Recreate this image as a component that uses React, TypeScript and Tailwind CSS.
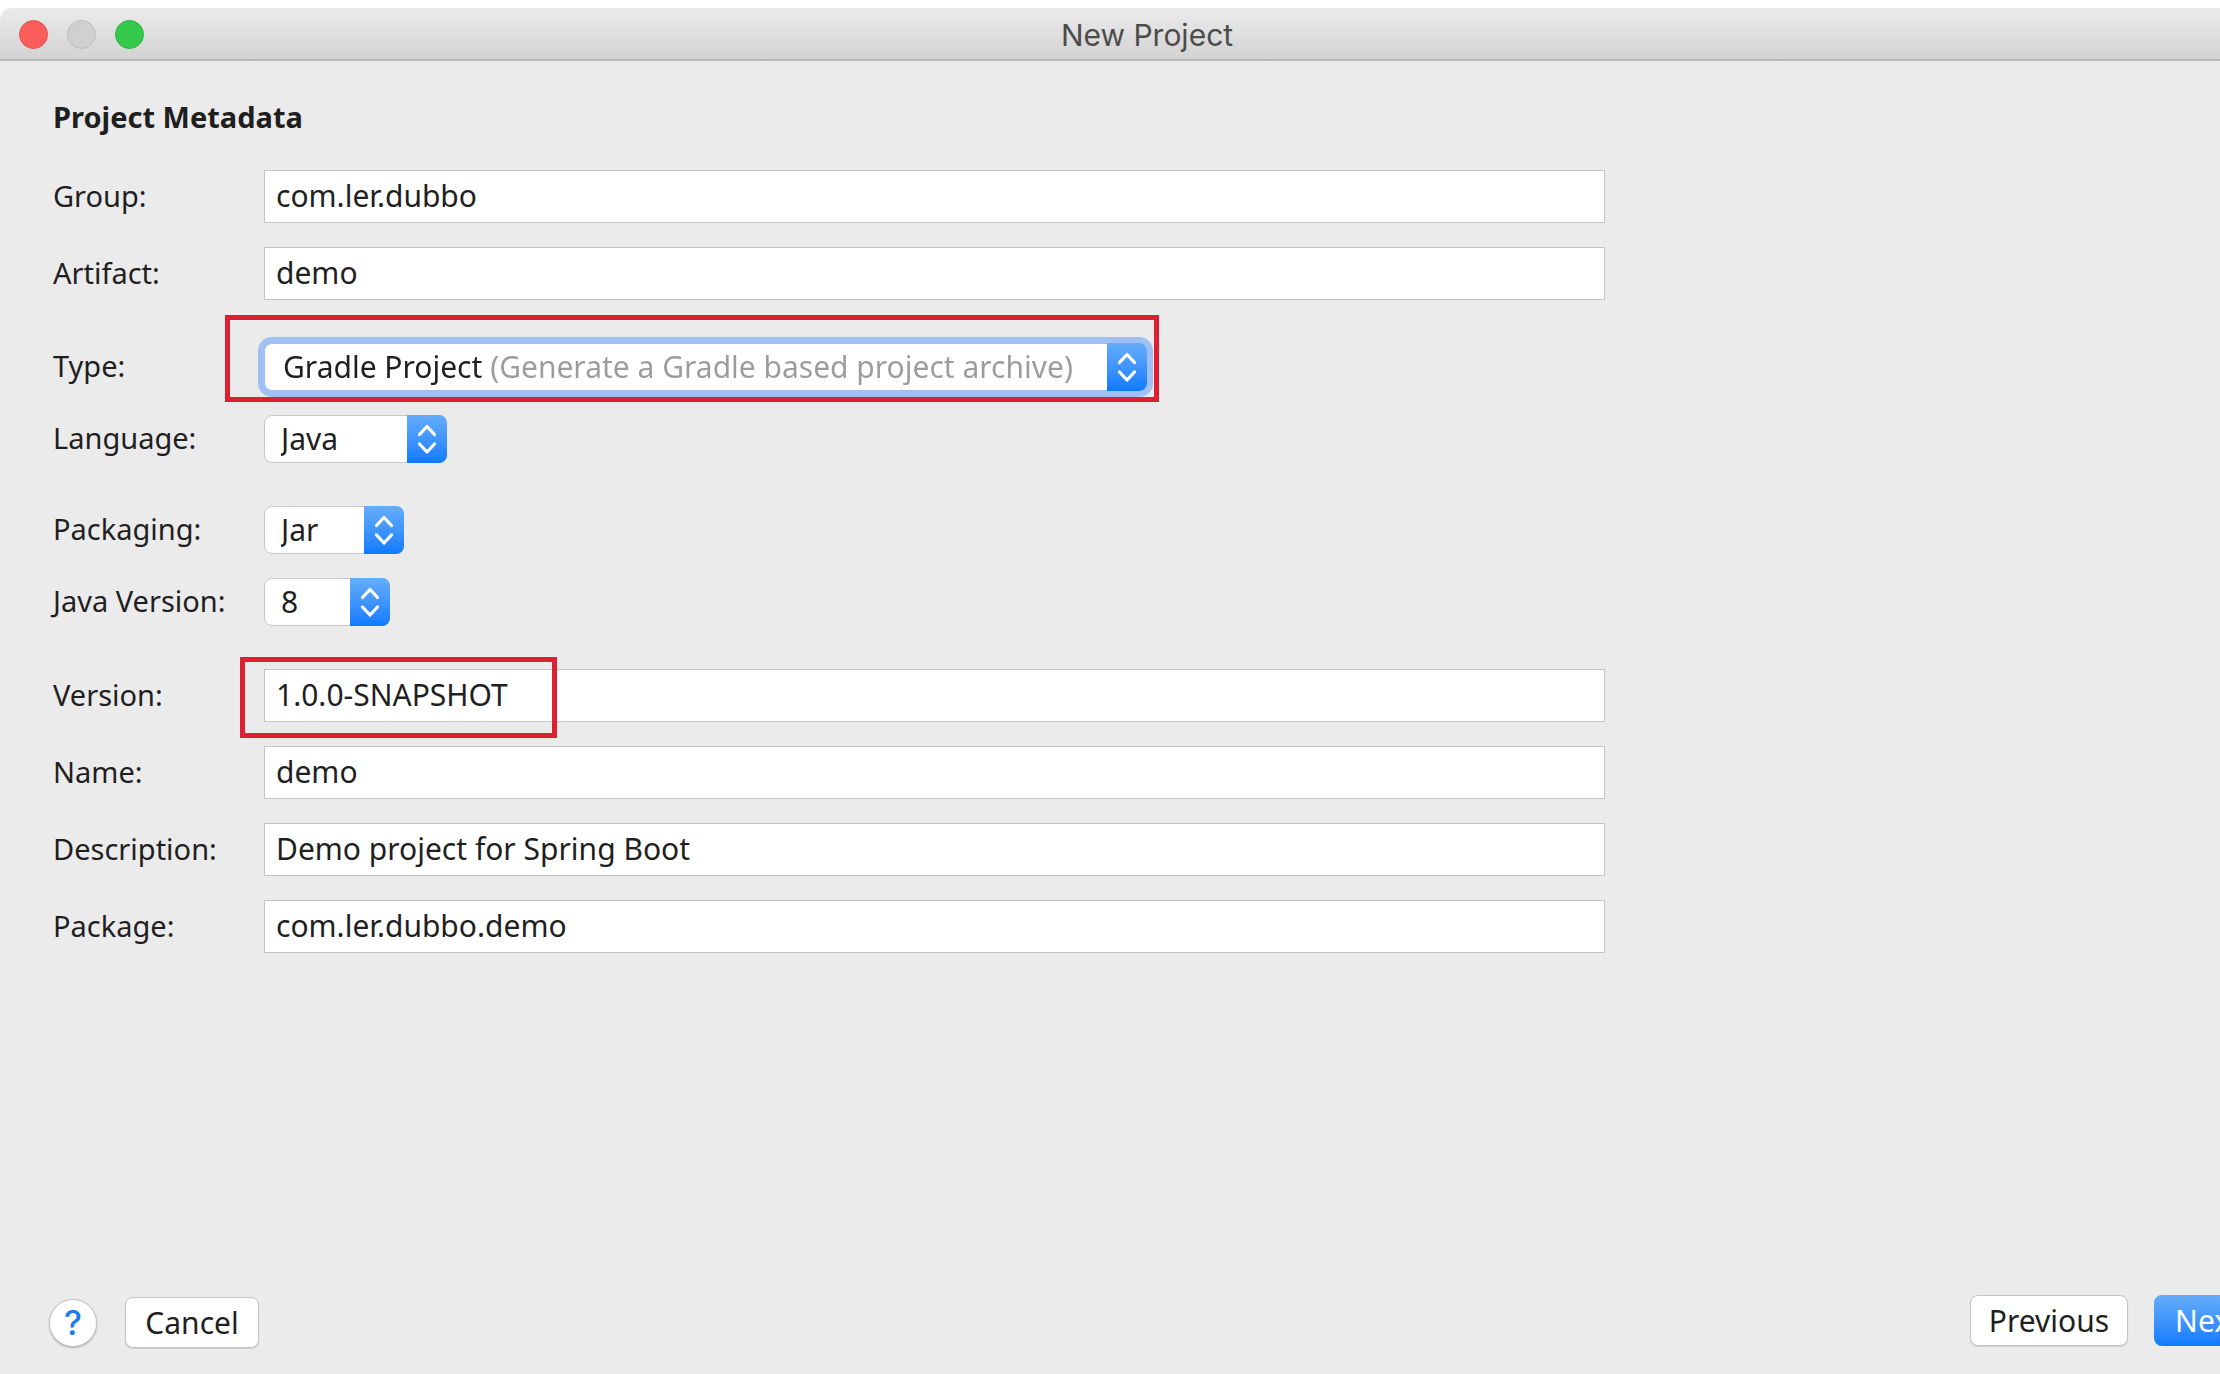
import type { ReactNode } from "react";

function Row({ id, label, children }: { id: string; label: string; children: ReactNode }) {
  return (
    <div className="flex items-center">
      <label htmlFor={id} className="w-[211px] shrink-0 pb-0.5 text-[29px]">
        {label}
      </label>
      {children}
    </div>
  );
}

function TextField({ id, label, value, marked }: { id: string; label: string; value: string; marked?: boolean }) {
  return (
    <Row id={id} label={label}>
      <div className="relative flex-1">
        <input
          id={id}
          type="text"
          defaultValue={value}
          className="block h-[53px] w-full border border-[#c4c4c4] bg-white px-[11px] pb-0.5 outline-none"
        />
        {marked && (
          <div className="pointer-events-none absolute -top-3 -bottom-4 -left-6 w-[317px] border-[5px] border-[#dc2032]" />
        )}
      </div>
    </Row>
  );
}

function Stepper() {
  return (
    <span className="pointer-events-none absolute -inset-y-px -right-px flex w-10 items-center justify-center rounded-r-lg bg-linear-to-b from-[#65adfa] to-[#0a7aff]">
      <svg width="22" height="32" viewBox="0 0 22 32" fill="none" stroke="white" strokeWidth="3.2" strokeLinecap="round" strokeLinejoin="round">
        <path d="M3.5 11.5 11 3.5l7.5 8M3.5 21l7.5 8 7.5-8" />
      </svg>
    </span>
  );
}

function SelectField({
  id,
  label,
  width,
  options,
  focused,
}: {
  id: string;
  label: string;
  width: string;
  options: string[];
  focused?: boolean;
}) {
  return (
    <Row id={id} label={label}>
      <div
        className={`relative h-12 rounded-lg border bg-white ${width} ${
          focused ? "border-[#a0c0f3] ring-[6px] ring-[#a0c0f3]" : "border-[#c8c8c8]"
        }`}
      >
        <select
          id={id}
          className={`block h-full w-full appearance-none pr-12 outline-none ${
            focused
              ? "bg-linear-to-r from-[#1f1f1f] from-[222px] to-[#9c9c9c] to-[222px] bg-clip-text pl-[18px] text-transparent"
              : "pl-4"
          }`}
        >
          {options.map((o) => (
            <option key={o} className="text-black">
              {o}
            </option>
          ))}
        </select>
        <Stepper />
        {focused && (
          <div className="pointer-events-none absolute -top-[29px] -right-[13px] -bottom-3 -left-10 border-[5px] border-[#dc2032]" />
        )}
      </div>
    </Row>
  );
}

const pushButton = "rounded-lg border border-[#c4c4c4] bg-white h-[51px] shadow-[0_1px_1px_rgba(0,0,0,0.12)]";

export default function App() {
  return (
    <div className="flex min-h-screen flex-col overflow-hidden bg-white pt-2 font-['Noto_Sans',sans-serif] text-[30px] leading-10 text-[#1f1f1f]">
      <header className="relative flex h-[53px] items-center justify-center rounded-tl-xl border-b-2 border-[#b9b9b9] bg-linear-to-b from-[#ebebeb] to-[#d3d3d3] pt-0.5 pl-[74px]">
        <div className="absolute left-[19px] flex gap-[19px]">
          <button type="button" aria-label="Close" className="size-[29px] rounded-full border border-[#e8514c] bg-[#fc5f5b]" />
          <button type="button" aria-label="Minimize" className="size-[29px] rounded-full border border-[#bdbdbd] bg-[#d0d0d0]" />
          <button type="button" aria-label="Zoom" className="size-[29px] rounded-full border border-[#2cb741] bg-[#34c94a]" />
        </div>
        <h1 className="font-['Inter',sans-serif] text-[30px] text-[#4c4c4c]">New Project</h1>
      </header>

      <main className="flex flex-1 flex-col bg-[#ebebeb] pt-9">
        <form className="w-full max-w-[1605px] pl-[53px]">
          <h2 className="mb-[33px] text-[29px] font-bold">Project Metadata</h2>
          <div className="flex flex-col gap-[43px]">
            <div className="flex flex-col gap-6">
              <TextField id="group" label="Group:" value="com.ler.dubbo" />
              <TextField id="artifact" label="Artifact:" value="demo" />
            </div>
            <div className="flex flex-col gap-6">
              <SelectField
                id="type"
                label="Type:"
                width="w-[883px]"
                options={["Gradle Project (Generate a Gradle based project archive)"]}
                focused
              />
              <SelectField id="language" label="Language:" width="w-[183px]" options={["Java"]} />
            </div>
            <div className="flex flex-col gap-6">
              <SelectField id="packaging" label="Packaging:" width="w-[140px]" options={["Jar"]} />
              <SelectField id="java-version" label="Java Version:" width="w-[126px]" options={["8"]} />
            </div>
            <div className="flex flex-col gap-6">
              <TextField id="version" label="Version:" value="1.0.0-SNAPSHOT" marked />
              <TextField id="name" label="Name:" value="demo" />
              <TextField id="description" label="Description:" value="Demo project for Spring Boot" />
              <TextField id="package" label="Package:" value="com.ler.dubbo.demo" />
            </div>
          </div>
        </form>

        <footer className="mt-auto flex items-end justify-between pt-8 pb-[26px] pl-[49px]">
          <div className="flex items-center">
            <button
              type="button"
              aria-label="Help"
              className="mr-7 flex size-12 items-center justify-center rounded-full border border-[#c4c4c4] bg-white font-['Inter',sans-serif] text-[34px] font-medium text-[#1a7ce6] shadow-[0_1px_2px_rgba(0,0,0,0.25)]"
            >
              ?
            </button>
            <button type="button" className={`${pushButton} w-[134px]`}>
              Cancel
            </button>
          </div>
          <div className="-mr-[42px] flex gap-[26px] pb-0.5">
            <button type="button" className={`${pushButton} w-[158px]`}>
              Previous
            </button>
            <button
              type="button"
              className="h-[51px] w-[108px] rounded-lg bg-linear-to-b from-[#65adfa] to-[#0a7aff] text-white"
            >
              Next
            </button>
          </div>
        </footer>
      </main>
    </div>
  );
}
